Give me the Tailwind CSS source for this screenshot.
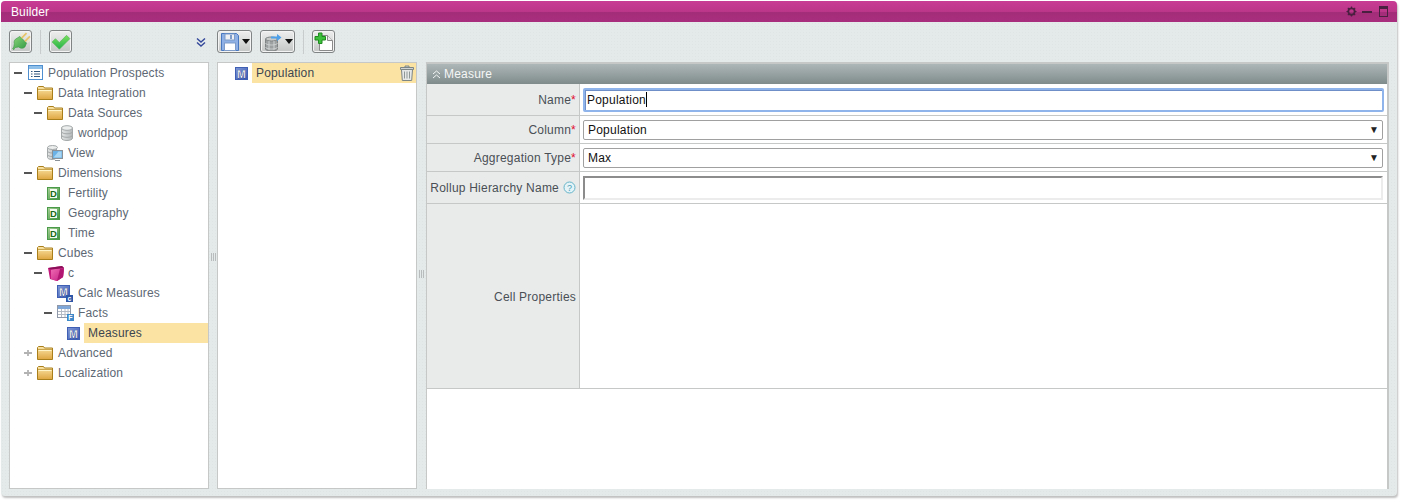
<!DOCTYPE html>
<html lang="en">
<head>
<meta charset="utf-8">
<title>Builder</title>
<script src="https://cdn.jsdelivr.net/npm/@tailwindcss/browser@4"></script>
</head>
<body class="w-[1402px] h-[503px] overflow-hidden bg-white font-['Liberation_Sans',Arial,sans-serif] text-[12px]">
<svg width="0" height="0" class="absolute">
  <defs>
    <linearGradient id="fold" x1="0" y1="0" x2="0" y2="1"><stop offset="0" stop-color="#fbe7ac"/><stop offset="1" stop-color="#dfa640"/></linearGradient>
    <linearGradient id="mblue" x1="0" y1="0" x2="1" y2="1"><stop offset="0" stop-color="#7f98d8"/><stop offset="1" stop-color="#3a58b0"/></linearGradient>
    <linearGradient id="dgreen" x1="0" y1="0" x2="1" y2="1"><stop offset="0" stop-color="#a9d29a"/><stop offset="1" stop-color="#3f9140"/></linearGradient>
    <linearGradient id="cyl" x1="0" y1="0" x2="1" y2="0"><stop offset="0" stop-color="#e4e6e6"/><stop offset="1" stop-color="#b4b8b8"/></linearGradient>
    <linearGradient id="cubef" x1="0" y1="0" x2="1" y2="1"><stop offset="0" stop-color="#f06cb4"/><stop offset="1" stop-color="#c21a80"/></linearGradient>
    <linearGradient id="plugg" x1="0" y1="0" x2="1" y2="1"><stop offset="0" stop-color="#8fd67a"/><stop offset="1" stop-color="#2f9a44"/></linearGradient>
    <linearGradient id="chk" x1="0" y1="0" x2="0" y2="1"><stop offset="0" stop-color="#7be05e"/><stop offset="1" stop-color="#24b04a"/></linearGradient>
    <symbol id="i-folder" viewBox="0 0 16 16"><path d="M.5 14.500V2.500l1-1h5l1 1.500h8v11.500z" fill="url(#fold)" stroke="#a97f1c"/><path d="M1.500 5.500h13" stroke="#fff3c8"/><path d="M1 4.500h14" stroke="#b8902c" stroke-opacity=".7"/></symbol>
    <symbol id="i-root" viewBox="0 0 16 16"><rect x="1.500" y=".5" width="14" height="14" fill="#fff" stroke="#4f8fd0"/><rect x="2" y="1" width="13" height="3" fill="#8fc0ea"/><path d="M4 6.500h1.500M7 6.500h6M4 9h1.500M7 9h6M4 11.500h1.500M7 11.500h6" stroke="#33587f"/></symbol>
    <symbol id="i-db" viewBox="0 0 16 16"><path d="M2.500 3v10c0 1.500 2.500 2.500 5.500 2.500s5.500-1 5.500-2.500V3z" fill="url(#cyl)" stroke="#a4a8a8"/><ellipse cx="8" cy="3" rx="5.500" ry="2.300" fill="#eceeee" stroke="#a4a8a8"/><path d="M2.500 6.500c0 1.500 2.500 2.300 5.500 2.300s5.500-.8 5.500-2.300M2.500 10c0 1.500 2.500 2.300 5.500 2.300s5.500-.8 5.500-2.300" fill="none" stroke="#a4a8a8"/></symbol>
    <symbol id="i-view" viewBox="0 0 16 16"><path d="M.5 2.500v10c0 1 2 2 4.500 2s4.500-1 4.500-2v-10z" fill="url(#cyl)" stroke="#a4a8a8"/><ellipse cx="5.500" cy="2.500" rx="5" ry="2" fill="#eceeee" stroke="#a4a8a8"/><path d="M.5 6c0 1 2 2 4.500 2M.5 9.500c0 1 2 2 4.500 2" fill="none" stroke="#a4a8a8"/><rect x="5.500" y="5.500" width="10" height="8" fill="#6bb3e6" stroke="#8a9298"/><path d="M8 15.500h5" stroke="#8a9298"/><path d="M6.500 12.500l5-6h3v6z" fill="#a9d6f2"/></symbol>
    <symbol id="i-dim" viewBox="0 0 13 13"><rect x=".5" y=".5" width="12" height="12" fill="url(#dgreen)" stroke="#4a9a4a"/><rect x="3" y="2" width="7" height="9" fill="#f6fbf2"/><text x="6.500" y="10" text-anchor="middle" font-family="Liberation Sans" font-weight="700" font-size="9.500" fill="#176a17">D</text></symbol>
    <symbol id="i-cube" viewBox="0 0 16 15"><path d="M0 2 14 0l2 2-1 9-6 4-7-2z" fill="#c41a7e"/><path d="M3 3.500 16 2l-1 9-6 4-6-2z" fill="url(#cubef)"/><path d="M0 2 14 0l2 2L3 3.500z" fill="#8a1058"/><path d="M9 15l3-12 4-1-1 9z" fill="#b01672"/></symbol>
    <symbol id="i-m" viewBox="0 0 13 13"><rect x=".5" y=".5" width="12" height="12" fill="url(#mblue)" stroke="#3f5fb5"/><text x="6.500" y="10.500" text-anchor="middle" font-family="Liberation Sans" font-weight="700" font-size="10.500" fill="#fff" stroke="#16286a" stroke-width=".25">M</text></symbol>
    <symbol id="i-mc" viewBox="0 0 16 17"><rect x=".5" y=".5" width="12" height="12" fill="url(#mblue)" stroke="#3f5fb5"/><text x="6.500" y="10.500" text-anchor="middle" font-family="Liberation Sans" font-weight="700" font-size="10.500" fill="#fff" stroke="#16286a" stroke-width=".25">M</text><rect x="9" y="10" width="7" height="7" fill="#2d55a8"/><text x="12.500" y="16" text-anchor="middle" font-family="Liberation Sans" font-weight="700" font-size="7" fill="#fff">c</text></symbol>
    <symbol id="i-facts" viewBox="0 0 17 16"><rect x=".5" y=".5" width="13" height="12" fill="#fff" stroke="#8e98a8"/><rect x="1" y="1" width="12" height="3" fill="#7fa8d8"/><path d="M1 6.500h12M1 9.500h12M4.500 4v8M8 4v8M11 4v8" stroke="#b4bac4"/><rect x="10" y="9" width="7" height="7" fill="#3c88c8"/><text x="13.500" y="15" text-anchor="middle" font-family="Liberation Sans" font-weight="700" font-size="7" fill="#fff">F</text></symbol>
    <symbol id="i-plug" viewBox="0 0 18 18"><path d="M8 4l6 6-1.500 3.500c-1.500 1.500-4 1.500-5.500 0L3.500 14l-1 2-1-1 1-1.500.5-3c-.5-1.500 0-3 1-4z" fill="url(#plugg)" stroke="#3f9a48" stroke-width=".6"/><path d="M9.500 5.500 14 1M12.500 8.500 17 4" stroke="#e8c468" stroke-width="1.600"/><path d="M8.500 3.500 11 1M14.500 9.500 17 7" stroke="#f2ecc8"/></symbol>
    <symbol id="i-check" viewBox="0 0 18 18"><path d="M1 9l3-3 3.500 3.500L14 3l3 3-9.500 9.500z" fill="url(#chk)" stroke="#58b858" stroke-width=".6"/></symbol>
    <symbol id="i-save" viewBox="0 0 18 18"><path d="M.5.5h15l2 2v15H.5z" fill="#8fb0e4" stroke="#4a78c0"/><rect x="4" y="1" width="9.500" height="6" fill="#eef0f4" stroke="#7f9cc8"/><rect x="9" y="2" width="2" height="4" fill="#7f9cc8"/><rect x="3.500" y="10" width="11" height="7.500" fill="#fff" stroke="#7f9cc8"/></symbol>
    <symbol id="i-dbx" viewBox="0 0 18 18"><path d="M1.500 6v10c0 1 2.500 2 6 2s6-1 6-2V6z" fill="#9ca0a0" stroke="#808484"/><ellipse cx="7.500" cy="6" rx="6" ry="2" fill="#c8caca" stroke="#808484"/><path d="M1.500 10c0 1 2.500 2 6 2s6-1 6-2M1.500 14c0 1 2.500 2 6 2s6-1 6-2M5 8v9M10 8v9" fill="none" stroke="#d0d2d2"/><path d="M7 3.500h6V1l4.500 3.500L13 8V5.500H7z" fill="#4ea0e8"/></symbol>
    <symbol id="i-add" viewBox="0 0 20 20"><path d="M5.500 3.500h8l5 5v10h-13z" fill="#fff" stroke="#8a8a8a"/><path d="M13.500 3.500v5h5" fill="#e8e8e8" stroke="#8a8a8a"/><path d="M4.500 1h3.500v3.500h3.500v3.500H8v3.500H4.500V8H1V4.500h3.500z" fill="#3cc03c" stroke="#1f8a1f"/></symbol>
    <symbol id="i-trash" viewBox="0 0 16 16"><path d="M1.500 2.500h13v2h-13zM6 2.500V1h4v1.500" fill="#cfd3d3" stroke="#7d8585"/><path d="M2.500 4.500h11l-.8 11H3.300z" fill="#e6e8e8" stroke="#7d8585"/><path d="M5.500 6.500v7M8 6.500v7M10.500 6.500v7" stroke="#8d9595"/></symbol>
    <symbol id="i-plus" viewBox="0 0 8 8"><path d="M0 4h8" stroke="#666"/><path d="M4 1v2M4 5v2" stroke="#777"/></symbol>
  </defs>
</svg>

<div class="w-[1396px] h-[495px] ml-px mt-px flex flex-col rounded-[4px] bg-[#e4e9e9] bg-[radial-gradient(#dfe5e5_0.8px,transparent_0.9px)] bg-[size:3px_3px] shadow-[1px_2px_2px_rgba(0,0,0,0.25)]">
  <!-- title bar -->
  <header class="h-[21px] shrink-0 flex items-center justify-between pl-[10px] pr-[9px] rounded-t-[4px] bg-[linear-gradient(#c93c95_0,#bb3689_50%,#a32d79_52%,#a82e7d_100%)] text-white">
    <span class="tracking-[0.1px]">Builder</span>
    <div class="flex items-center gap-[5px]">
      <svg width="11" height="11" viewBox="0 0 12 12"><circle cx="6" cy="6" r="3.500" fill="none" stroke="#4a2040" stroke-width="2"/><path d="M6 .5v2M6 9.500v2M.5 6h2M9.500 6h2M2 2l1.500 1.500M8.500 8.500 10 10M10 2 8.500 3.500M3.500 8.500 2 10" stroke="#4a2040" stroke-width="1.300"/></svg>
      <span class="block w-[10px] h-[2px] bg-[#4a2040]"></span>
      <span class="block w-[9px] h-[11px] border border-[#4a2040] border-t-[3px] ml-[2px]"></span>
    </div>
  </header>

  <!-- toolbar -->
  <div class="h-[40px] shrink-0 flex items-center pl-[8px] pb-[1px]">
    <button class="w-[23px] h-[23px] flex items-center justify-center rounded-[3px] border border-[#808484] bg-[linear-gradient(#eeeeee,#c4c6c6)] shadow-[inset_0_0_0_1px_#f4f4f4]"><svg width="20" height="20"><use href="#i-plug"/></svg></button>
    <span class="w-px h-[24px] bg-[#c8cccc] mx-[8px]"></span>
    <button class="w-[23px] h-[23px] flex items-center justify-center rounded-[3px] border border-[#808484] bg-[linear-gradient(#eeeeee,#c4c6c6)] shadow-[inset_0_0_0_1px_#f4f4f4]"><svg width="20" height="20"><use href="#i-check"/></svg></button>
    <svg class="ml-[123px] mr-[10px]" width="12" height="12" viewBox="0 0 12 12"><path d="M2 2.500 6 6l4-3.500M2 6.500 6 10l4-3.500" fill="none" stroke="#33489a" stroke-width="1.400"/></svg>
    <button class="w-[35px] h-[23px] flex items-center gap-[3px] pl-[3px] rounded-[3px] border border-[#808484] bg-[linear-gradient(#eeeeee,#c4c6c6)] shadow-[inset_0_0_0_1px_#f4f4f4]"><svg width="18" height="18"><use href="#i-save"/></svg><svg width="8" height="5" viewBox="0 0 8 5"><path d="M0 0h8L4 5z" fill="#111"/></svg></button>
    <button class="w-[35px] h-[23px] ml-[8px] flex items-center gap-[3px] pl-[3px] rounded-[3px] border border-[#808484] bg-[linear-gradient(#eeeeee,#c4c6c6)] shadow-[inset_0_0_0_1px_#f4f4f4]"><svg width="18" height="18"><use href="#i-dbx"/></svg><svg width="8" height="5" viewBox="0 0 8 5"><path d="M0 0h8L4 5z" fill="#111"/></svg></button>
    <span class="w-px h-[24px] bg-[#c8cccc] mx-[8px]"></span>
    <button class="w-[23px] h-[23px] flex items-center justify-center rounded-[3px] border border-[#808484] bg-[linear-gradient(#eeeeee,#c4c6c6)] shadow-[inset_0_0_0_1px_#f4f4f4]"><svg width="20" height="20"><use href="#i-add"/></svg></button>
  </div>

  <!-- panels -->
  <div class="flex flex-1 min-h-0 pl-[8px] pb-[7px] pr-[8px]">
    <!-- tree -->
    <nav class="w-[200px] shrink-0 bg-white border border-[#c6c8c8] text-[#5d6874] tracking-[0.15px] overflow-hidden">
      <div class="h-5 flex items-center pl-[4px]"><span class="w-[8px] h-[2px] bg-[#555] mr-[5px]"></span><svg class="mr-[5px]" width="16" height="16"><use href="#i-root"/></svg><span>Population Prospects</span></div>
      <div class="h-5 flex items-center pl-[14px]"><span class="w-[8px] h-[2px] bg-[#555] mr-[5px]"></span><svg class="mr-[5px]" width="16" height="16"><use href="#i-folder"/></svg><span>Data Integration</span></div>
      <div class="h-5 flex items-center pl-[24px]"><span class="w-[8px] h-[2px] bg-[#555] mr-[5px]"></span><svg class="mr-[5px]" width="16" height="16"><use href="#i-folder"/></svg><span>Data Sources</span></div>
      <div class="h-5 flex items-center pl-[49px]"><svg class="mr-[3px]" width="16" height="16"><use href="#i-db"/></svg><span>worldpop</span></div>
      <div class="h-5 flex items-center pl-[37px]"><svg class="mr-[5px]" width="16" height="16"><use href="#i-view"/></svg><span>View</span></div>
      <div class="h-5 flex items-center pl-[14px]"><span class="w-[8px] h-[2px] bg-[#555] mr-[5px]"></span><svg class="mr-[5px]" width="16" height="16"><use href="#i-folder"/></svg><span>Dimensions</span></div>
      <div class="h-5 flex items-center pl-[37px]"><svg class="mr-[8px]" width="13" height="13"><use href="#i-dim"/></svg><span>Fertility</span></div>
      <div class="h-5 flex items-center pl-[37px]"><svg class="mr-[8px]" width="13" height="13"><use href="#i-dim"/></svg><span>Geography</span></div>
      <div class="h-5 flex items-center pl-[37px]"><svg class="mr-[8px]" width="13" height="13"><use href="#i-dim"/></svg><span>Time</span></div>
      <div class="h-5 flex items-center pl-[14px]"><span class="w-[8px] h-[2px] bg-[#555] mr-[5px]"></span><svg class="mr-[5px]" width="16" height="16"><use href="#i-folder"/></svg><span>Cubes</span></div>
      <div class="h-5 flex items-center pl-[24px]"><span class="w-[8px] h-[2px] bg-[#555] mr-[6px]"></span><svg class="mr-[4px]" width="16" height="15"><use href="#i-cube"/></svg><span>c</span></div>
      <div class="h-5 flex items-center pl-[47px]"><svg class="mr-[5px]" width="16" height="17"><use href="#i-mc"/></svg><span>Calc Measures</span></div>
      <div class="h-5 flex items-center pl-[34px]"><span class="w-[8px] h-[2px] bg-[#555] mr-[5px]"></span><svg class="mr-[4px]" width="17" height="16"><use href="#i-facts"/></svg><span>Facts</span></div>
      <div class="h-5 flex items-center pl-[57px]"><svg class="mr-[4px]" width="13" height="13"><use href="#i-m"/></svg><span class="flex-1 h-5 leading-5 pl-[4px] bg-[#fbe3a3] text-[#3d4650]">Measures</span></div>
      <div class="h-5 flex items-center pl-[14px]"><svg class="mr-[5px]" width="8" height="8"><use href="#i-plus"/></svg><svg class="mr-[5px]" width="16" height="16"><use href="#i-folder"/></svg><span>Advanced</span></div>
      <div class="h-5 flex items-center pl-[14px]"><svg class="mr-[5px]" width="8" height="8"><use href="#i-plus"/></svg><svg class="mr-[5px]" width="16" height="16"><use href="#i-folder"/></svg><span>Localization</span></div>
    </nav>

    <!-- splitter -->
    <div class="w-[8px] shrink-0 flex items-center justify-center gap-px pb-[37px]"><span class="w-px h-[8px] bg-[#b8bcbc]"></span><span class="w-px h-[8px] bg-[#b8bcbc]"></span><span class="w-px h-[8px] bg-[#b8bcbc]"></span></div>

    <!-- list -->
    <section class="w-[200px] shrink-0 bg-white border border-[#c6c8c8] text-[#3d4650] tracking-[0.15px]">
      <div class="h-5 flex items-center pl-[17px]"><svg class="mr-[4px]" width="13" height="13"><use href="#i-m"/></svg><span class="flex-1 h-5 leading-5 pl-[4px] bg-[#fbe3a3] flex items-center justify-between pr-[1px]">Population<svg width="16" height="16"><use href="#i-trash"/></svg></span></div>
    </section>

    <!-- splitter -->
    <div class="w-[9px] shrink-0 flex items-center justify-center gap-px pb-[3px]"><span class="w-px h-[8px] bg-[#b8bcbc]"></span><span class="w-px h-[8px] bg-[#b8bcbc]"></span><span class="w-px h-[8px] bg-[#b8bcbc]"></span></div>

    <!-- form -->
    <section class="flex-1 min-w-0 bg-white border-x border-l-[#c6c8c8] border-r-[2px] border-r-[#c6c8c8] border-t-[2px] border-t-[#c6c8c8] flex flex-col text-[#4a4f55] tracking-[0.22px]">
      <div class="h-[20px] shrink-0 flex items-center pl-[5px] gap-[3px] bg-[linear-gradient(#aeb7b7,#7f8b8b)] text-[#f4f6f6]">
        <svg width="9" height="9" viewBox="0 0 9 9"><path d="M1 4 4.500 1 8 4M1 8 4.500 5 8 8" fill="none" stroke="#f4f6f6"/></svg>
        <span>Measure</span>
      </div>
      <div class="grid grid-cols-[153px_1fr] grid-rows-[32px_28px_28px_32px_184px] border-b border-[#c6c8c8]">
        <label class="bg-[#e9ebeb] border-r border-b border-[#c6c8c8] flex items-center justify-end pr-[3px]">Name<span class="text-[#e01030]">*</span></label>
        <div class="relative border-b border-[#c6c8c8] pl-[3px] pr-[3px] flex items-center">
          <input class="w-full h-[24px] px-[2px] rounded-[2px] border-2 border-[#8fb4ec] text-[12px] text-[#111] tracking-[0.22px] outline-none shadow-[inset_1px_1px_0_#6f8fc8]" value="Population">
          <span class="absolute left-[66px] top-[8px] w-px h-[15px] bg-black"></span>
        </div>
        <label class="bg-[#e9ebeb] border-r border-b border-[#c6c8c8] flex items-center justify-end pr-[3px]">Column<span class="text-[#e01030]">*</span></label>
        <div class="relative border-b border-[#c6c8c8] pl-[3px] pr-[4px] flex items-center">
          <select class="appearance-none w-full h-[20px] pl-[4px] rounded-[2px] border border-[#a0a0a0] bg-white text-[12px] text-[#111] tracking-[0.22px]"><option>Population</option></select>
          <span class="absolute right-[8px] top-[8px] text-[10px] leading-[11px] text-[#222]">▼</span>
        </div>
        <label class="bg-[#e9ebeb] border-r border-b border-[#c6c8c8] flex items-center justify-end pr-[3px]">Aggregation Type<span class="text-[#e01030]">*</span></label>
        <div class="relative border-b border-[#c6c8c8] pl-[3px] pr-[4px] flex items-center">
          <select class="appearance-none w-full h-[20px] pl-[4px] rounded-[2px] border border-[#a0a0a0] bg-white text-[12px] text-[#111] tracking-[0.22px]"><option>Max</option></select>
          <span class="absolute right-[8px] top-[8px] text-[10px] leading-[11px] text-[#222]">▼</span>
        </div>
        <label class="bg-[#e9ebeb] border-r border-b border-[#c6c8c8] flex items-center justify-end pr-[3px] gap-[4px]">Rollup Hierarchy Name<svg width="13" height="13" viewBox="0 0 13 13"><circle cx="6.500" cy="6.500" r="5.500" fill="#e4f3f7" stroke="#65b4c8"/><text x="6.500" y="10" text-anchor="middle" font-family="Liberation Sans" font-size="9" fill="#4a9cb4">?</text></svg></label>
        <div class="border-b border-[#c6c8c8] pl-[3px] pr-[4px] flex items-center">
          <input class="w-full h-[24px] px-[3px] border-2 border-t-[#8c8c8c] border-l-[#8c8c8c] border-b-[#ececec] border-r-[#ececec] outline-none">
        </div>
        <label class="bg-[#e9ebeb] border-r border-[#c6c8c8] flex items-center justify-end pr-[3px] pt-[2px]">Cell Properties</label>
        <div></div>
      </div>
    </section>
  </div>
</div>
</body>
</html>
